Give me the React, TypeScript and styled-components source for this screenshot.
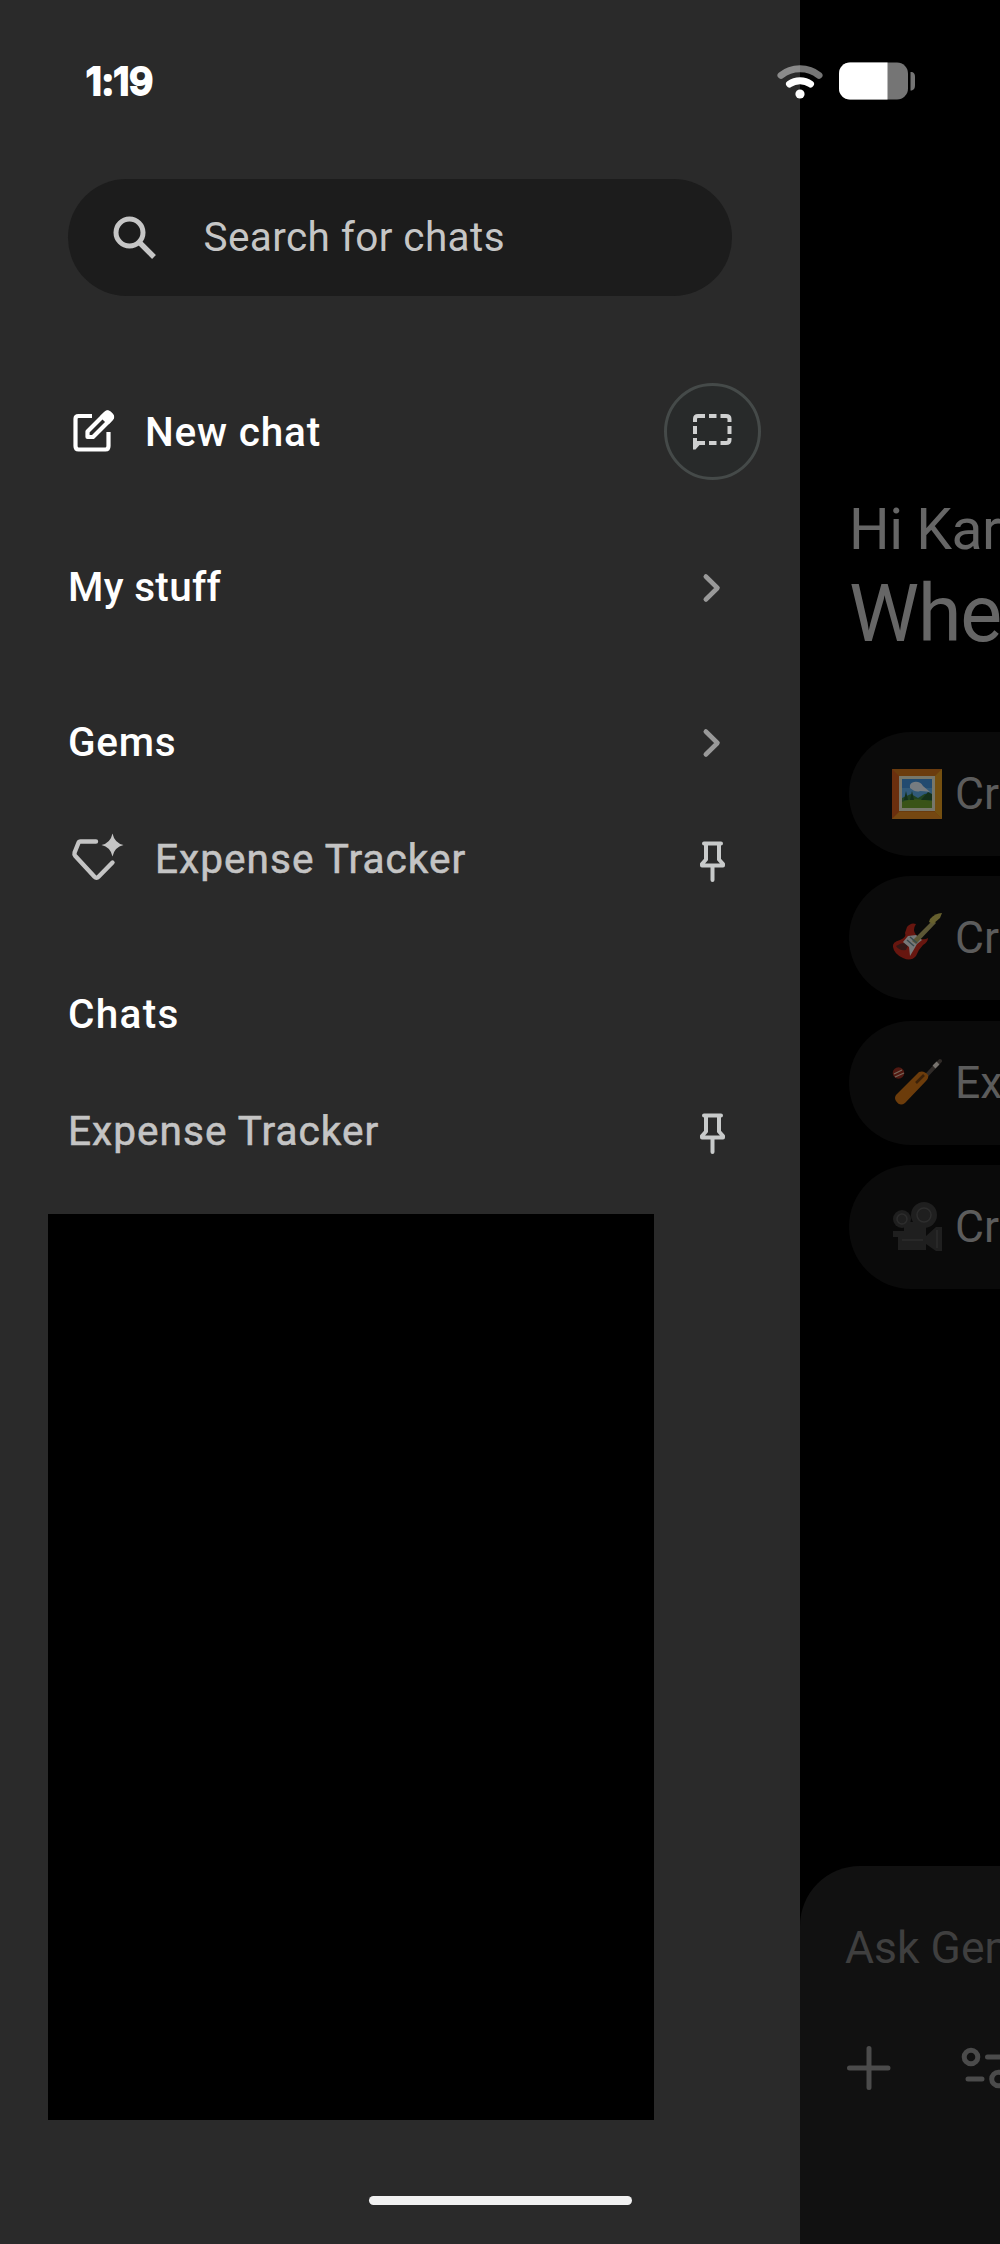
import React from "react";
import styled, { createGlobalStyle } from "styled-components";

const GlobalStyle = createGlobalStyle`
  * { box-sizing: border-box; }
  body { margin: 0; background: #000; }
`;

const Screen = styled.div`
  position: relative;
  display: flex;
  width: 1000px;
  height: 2244px;
  overflow: hidden;
  background: #000;
  font-family: Roboto, "Noto Sans", sans-serif;
`;

const StatusBar = styled.header`
  position: absolute;
  inset: 0 0 auto 0;
  height: 162px;
  padding: 0 84px 0 86px;
  display: flex;
  align-items: center;
  justify-content: space-between;
  color: #fff;
`;

const Clock = styled.span`
  font-family: Inter, sans-serif;
  font-size: 38px;
  font-weight: 600;
  letter-spacing: -0.4px;
  -webkit-text-stroke: 2px #fff;
  stroke-linejoin: round;
  paint-order: stroke fill;
`;

const StatusIcons = styled.div`
  display: flex;
  align-items: center;
  gap: 16px;
`;

const HomeIndicator = styled.div`
  position: absolute;
  left: 368.5px;
  top: 2196px;
  width: 263.5px;
  height: 9px;
  border-radius: 5px;
  background: #f1f1f1;
`;

const Drawer = styled.aside`
  flex: 0 0 800px;
  display: flex;
  flex-direction: column;
  padding: 179px 68px 0;
  background: #2a2a2a;
`;

const SearchBox = styled.div`
  display: flex;
  align-items: center;
  gap: 46.5px;
  height: 117px;
  flex: none;
  padding-left: 45px;
  border-radius: 59px;
  background: #1c1c1c;
  color: #c6c6c6;
`;

const SearchText = styled.span`
  padding-bottom: 2px;
  font-size: 40.5px;
  letter-spacing: 0.4px;
`;

const Row = styled.div<{ $gap?: number }>`
  display: flex;
  align-items: center;
  justify-content: space-between;
  flex: none;
  height: 117px;
  margin-top: ${(p) => p.$gap ?? 0}px;
`;

const RowStart = styled.div<{ $gap: number; $inset: number }>`
  display: flex;
  align-items: center;
  gap: ${(p) => p.$gap}px;
  padding-left: ${(p) => p.$inset}px;
`;

const Label = styled.span<{ $track?: number; $drop?: number }>`
  padding-top: ${(p) => p.$drop ?? 0}px;
  padding-bottom: ${(p) => (p.$drop ? 0 : 2)}px;
  font-size: 40.5px;
  font-weight: 500;
  line-height: 48px;
  white-space: nowrap;
  letter-spacing: ${(p) => p.$track ?? 0.3}px;
  color: #fff;
`;

const MutedLabel = styled(Label)`
  font-weight: 400;
  letter-spacing: 1.05px;
  color: #c4c4c4;
  -webkit-text-stroke: 0.6px #c4c4c4;
`;

const TempChatButton = styled.div`
  display: grid;
  place-items: center;
  width: 97px;
  height: 97px;
  margin-right: -29px;
  border: 3px solid #454a49;
  border-radius: 50%;
  background: #282a2a;
`;

const TrailingIcon = styled.div`
  display: grid;
  place-items: center;
  width: 40px;
`;

const HiddenChats = styled.div`
  flex: none;
  width: 606px;
  height: 906px;
  margin: 24px 0 0 -20px;
  background: #000;
`;

const Main = styled.main`
  flex: 1;
  min-width: 0;
  display: flex;
  flex-direction: column;
  overflow: hidden;
  white-space: nowrap;
`;

const Greeting = styled.div`
  padding: 490px 0 0 49px;
  color: #666;
`;

const Hello = styled.div`
  height: 80px;
  line-height: 80px;
  font-size: 57px;
  letter-spacing: -0.5px;
`;

const Headline = styled.div`
  height: 88px;
  line-height: 88px;
  font-size: 79px;
  letter-spacing: -1.2px;
`;

const Chips = styled.div`
  display: flex;
  flex-direction: column;
  gap: 20.4px;
  margin-top: 74px;
  padding-left: 49px;
`;

const Chip = styled.div`
  display: flex;
  align-items: center;
  gap: 13px;
  width: 480px;
  height: 124px;
  padding-left: 43px;
  border-radius: 62px;
  background: #0a0a0a;
  color: #5c5c5c;
  font-size: 44.5px;
`;

const Composer = styled.section`
  display: flex;
  flex-direction: column;
  width: 1000px;
  height: 378px;
  margin-top: auto;
  padding: 55px 0 0 45px;
  border-radius: 60px 60px 0 0;
  background: #111;
`;

const Prompt = styled.div`
  height: 54px;
  line-height: 54px;
  font-size: 44.5px;
  color: #3f3f3f;
`;

const Tools = styled.div`
  display: flex;
  align-items: center;
  gap: 67px;
  margin-top: 69px;
`;

const WifiIcon = () => (
  <svg width="46" height="38" viewBox="0 0 46 38" fill="none" strokeLinecap="round">
    <path d="M4 13.3 C14.5 4.4 31.500 4.400 42 13.300" stroke="#fff" strokeOpacity="0.46" strokeWidth="7" />
    <path d="M12.500 22 C18.500 17.500 27.500 17.500 33.500 22" stroke="#fff" strokeWidth="7" />
    <circle cx="23" cy="32" r="4.600" fill="#fff" />
  </svg>
);

const BatteryIcon = () => (
  <svg width="77" height="38" viewBox="0 0 77 38">
    <defs>
      <clipPath id="cell">
        <rect x="0" y="0.500" width="69" height="37" rx="11" />
      </clipPath>
    </defs>
    <g clipPath="url(#cell)">
      <rect width="77" height="38" fill="#757575" />
      <rect width="48.500" height="38" fill="#fff" />
    </g>
    <path d="M71.500 10 C75 10 76 12 76 15 V23 C76 26 75 28.500 71.500 28.500 Z" fill="#757575" />
  </svg>
);

const SearchIcon = () => (
  <svg width="44" height="44" viewBox="0 0 44 44" fill="none" stroke="currentColor" strokeWidth="5">
    <circle cx="16.500" cy="16.500" r="13.500" />
    <path d="M26.500 26.500 L41 41" strokeWidth="5.400" />
  </svg>
);

const ComposeIcon = () => (
  <svg width="44" height="44" viewBox="0 0 44 44" fill="none" stroke="#fff" strokeWidth="4.200" strokeLinejoin="round">
    <path d="M20 6 H6.500 Q3.500 6 3.500 9 V36 Q3.500 39.500 6.500 39.500 H33.500 Q36.500 39.500 36.500 36 V22" />
    <path d="M15.500 27 V21.500 L33.500 3.500 Q35.500 1.500 37.500 3.500 L39 5 Q41 7 39 9 L21 27 Z" />
    <path d="M30.500 6.500 L36 12 L39.500 8 Q40.500 6.500 39 5 L37.500 3.500 Q35.500 2 34 3.500 Z" fill="#fff" />
  </svg>
);

const TempChatIcon = () => (
  <svg width="42" height="38" viewBox="0 0 42 38" fill="none" stroke="#cfd0d0" strokeWidth="4">
    <path d="M3 9 V6 Q3 3 6 3 H13 M17 3 H24.500 M28.500 3 H34 Q37.500 3 37.500 6 V9" />
    <path d="M3 13 V21 M37.500 13 V21 M37.500 25 V27 Q37.500 30 34 30 H28.500 M24.500 30 H17 M13 30 H7" />
    <path d="M1 25 H5 V28 H13 V32 H7.500 L3.500 36.500 H1 Z" fill="#cfd0d0" stroke="none" />
  </svg>
);

const ChevronIcon = () => (
  <svg width="20" height="30" viewBox="0 0 20 30" fill="none" stroke="#999" strokeWidth="4.600" strokeLinecap="round" strokeLinejoin="round">
    <path d="M3.800 3.500 L15.500 15 L3.800 26.500" />
  </svg>
);

const PinIcon = () => (
  <svg width="26" height="42" viewBox="0 0 26 42" fill="none" stroke="#c8caca" strokeWidth="4" strokeLinecap="round" strokeLinejoin="round" transform="translate(0.500 1.500)">
    <path d="M4.500 3 H21.500 M6.500 3 V19 L2.500 23.500 V25 H23.500 V23.500 L19.500 19 V3 M13 25 V39.500" />
  </svg>
);

const GemIcon = () => (
  <svg width="54" height="54" viewBox="0 0 54 54" fill="none" stroke="#c4c4c4" strokeWidth="4.400" strokeLinecap="round" strokeLinejoin="round">
    <path d="M25 8.500 H9.500 Q8 8.500 7.400 10 L3.600 19.500 Q3 21.500 4.300 23 L23.500 43.800 Q25.500 46 27.500 43.800 L41.500 29.500" />
    <path d="M41.500 0.500 Q43.500 10 52.500 12 Q43.500 14 41.500 23.500 Q39.500 14 30.500 12 Q39.500 10 41.500 0.500 Z" fill="#c4c4c4" stroke="none" />
  </svg>
);

const PictureEmoji = () => (
  <svg width="50" height="50" viewBox="0 0 50 50">
    <rect width="50" height="50" fill="#6b3c0e" />
    <path d="M0 0 L7 7 V43 L0 50 Z" fill="#6b2f0e" />
    <path d="M50 0 L43 7 V43 L50 50 Z" fill="#755010" />
    <path d="M0 50 L7 43 H43 L50 50 Z" fill="#754711" />
    <rect x="7" y="7" width="36" height="35" fill="#77776a" />
    <rect x="10" y="10" width="30" height="29" fill="#224b70" />
    <path d="M10 25 H40 V39 H10 Z" fill="#214322" />
    <path d="M10 19 H40 V27 L34 24 L26 29 L19 25 L10 29 Z" fill="#315a79" />
    <path d="M10 33 Q20 28 40 32 V39 H10 Z" fill="#3a5418" />
    <path d="M12 31 L14 22 L16 31 Z M18 31 L20 22 L22 31 Z M29 31 L36 23 L40 25 V31 Z" fill="#14301a" />
    <path d="M18 19 Q17 14 22 13 Q28 12 31 17 L38 23 Q31 22 28 22 Q24 24 18 19 Z" fill="#777c80" />
  </svg>
);

const GuitarEmoji = () => (
  <svg width="50" height="50" viewBox="0 0 50 50">
    <path d="M15 14 Q19 9 24 11 Q20 17 24 22 L29 26 Q33 27 36 25 Q36 29 31 32 Q26 37 24 43 Q19 49 11 45 Q2 41 1 34 Q0 29 8 27 Q15 24 13 20 Z" fill="#67160f" />
    <path d="M4 33 Q10 29 17 30 L14 37 Q7 38 4 33 Z" fill="#321715" />
    <path d="M16 23 L24 22 L30 27 L25 31 L21 38 L18 43 L17 34 L11 29 Z" fill="#777878" />
    <path d="M20 28 L41 7 L44 10 L24 31 Z" fill="#5c5735" />
    <path d="M38 6 Q43 0 50 0 L48 5 L41 11 L37 9 Z" fill="#66602e" />
    <path d="M15 27 L22 33 M18 24 L25 30" stroke="#37494d" strokeWidth="1.500" />
  </svg>
);

const CricketEmoji = () => (
  <svg width="50" height="50" viewBox="0 0 50 50">
    <circle cx="6.500" cy="15" r="5.800" fill="#501811" />
    <path d="M2 16 L10 12 M3 19 L12 15" stroke="#77695c" strokeWidth="1.200" />
    <path d="M34 18 L48 3" stroke="#302b28" strokeWidth="4" strokeLinecap="round" />
    <path d="M42 9 L46 5" stroke="#77736e" strokeWidth="4" />
    <path d="M4 37 L27 14 Q32 12 36 17 Q37 20 34 23 L13 45 Q8 49 4 43 Q2 40 4 37 Z" fill="#6c3c0b" />
    <path d="M24 25 L32 17" stroke="#3b2109" strokeWidth="2.500" />
  </svg>
);

const CameraEmoji = () => (
  <svg width="50" height="50" viewBox="0 0 50 50" fill="#1f1f1f">
    <circle cx="10" cy="17" r="9" />
    <circle cx="32" cy="13" r="13" />
    <path d="M1 29 H34 V48 H6 V35 H1 Z" />
    <path d="M12 20 H34 V31 H12 Z" />
    <path d="M34 34 L44 25 H50 V49 H44 L34 42 Z" />
    <g fill="none" stroke="#2d2d2d" strokeWidth="1.500">
      <circle cx="10" cy="17" r="5" />
      <circle cx="32" cy="13" r="7" />
      <path d="M10 38 H31 M45 28 V46" />
    </g>
  </svg>
);

const PlusIcon = () => (
  <svg width="48" height="48" viewBox="0 0 48 48" stroke="#4b4b4b" strokeWidth="5" strokeLinecap="round">
    <path d="M4.500 24 H43 M24 4.500 V43.500" />
  </svg>
);

const TuneIcon = () => (
  <svg width="50" height="48" viewBox="0 0 50 48" fill="none" stroke="#4b4b4b" strokeWidth="5" strokeLinecap="round">
    <circle cx="11" cy="13" r="6.800" />
    <path d="M27.500 13 H46 M8 35 H22" />
    <circle cx="38.500" cy="35" r="6.800" />
  </svg>
);

const suggestions = [
  { icon: <PictureEmoji />, text: "Create image" },
  { icon: <GuitarEmoji />, text: "Create music" },
  { icon: <CricketEmoji />, text: "Explore cricket" },
  { icon: <CameraEmoji />, text: "Create video" },
];

export default function App() {
  return (
    <Screen>
      <GlobalStyle />
      <Drawer>
        <SearchBox>
          <SearchIcon />
          <SearchText>Search for chats</SearchText>
        </SearchBox>
        <Row $gap={77}>
          <RowStart $gap={29} $inset={4}>
            <ComposeIcon />
            <Label $track={0.8} $drop={1}>New chat</Label>
          </RowStart>
          <TempChatButton>
            <TempChatIcon />
          </TempChatButton>
        </Row>
        <Row $gap={39}>
          <Label>My stuff</Label>
          <TrailingIcon>
            <ChevronIcon />
          </TrailingIcon>
        </Row>
        <Row $gap={38}>
          <Label $track={0.7}>Gems</Label>
          <TrailingIcon>
            <ChevronIcon />
          </TrailingIcon>
        </Row>
        <Row>
          <RowStart $gap={30} $inset={3}>
            <GemIcon />
            <MutedLabel>Expense Tracker</MutedLabel>
          </RowStart>
          <TrailingIcon>
            <PinIcon />
          </TrailingIcon>
        </Row>
        <Row $gap={38}>
          <Label $track={1.3}>Chats</Label>
        </Row>
        <Row>
          <MutedLabel>Expense Tracker</MutedLabel>
          <TrailingIcon>
            <PinIcon />
          </TrailingIcon>
        </Row>
        <HiddenChats />
      </Drawer>
      <Main>
        <Greeting>
          <Hello>Hi Karan</Hello>
          <Headline>Where should we start?</Headline>
        </Greeting>
        <Chips>
          {suggestions.map((s) => (
            <Chip key={s.text}>
              {s.icon}
              <span>{s.text}</span>
            </Chip>
          ))}
        </Chips>
        <Composer>
          <Prompt>Ask Gemini</Prompt>
          <Tools>
            <PlusIcon />
            <TuneIcon />
          </Tools>
        </Composer>
      </Main>
      <StatusBar>
        <Clock>1:19</Clock>
        <StatusIcons>
          <WifiIcon />
          <BatteryIcon />
        </StatusIcons>
      </StatusBar>
      <HomeIndicator />
    </Screen>
  );
}
